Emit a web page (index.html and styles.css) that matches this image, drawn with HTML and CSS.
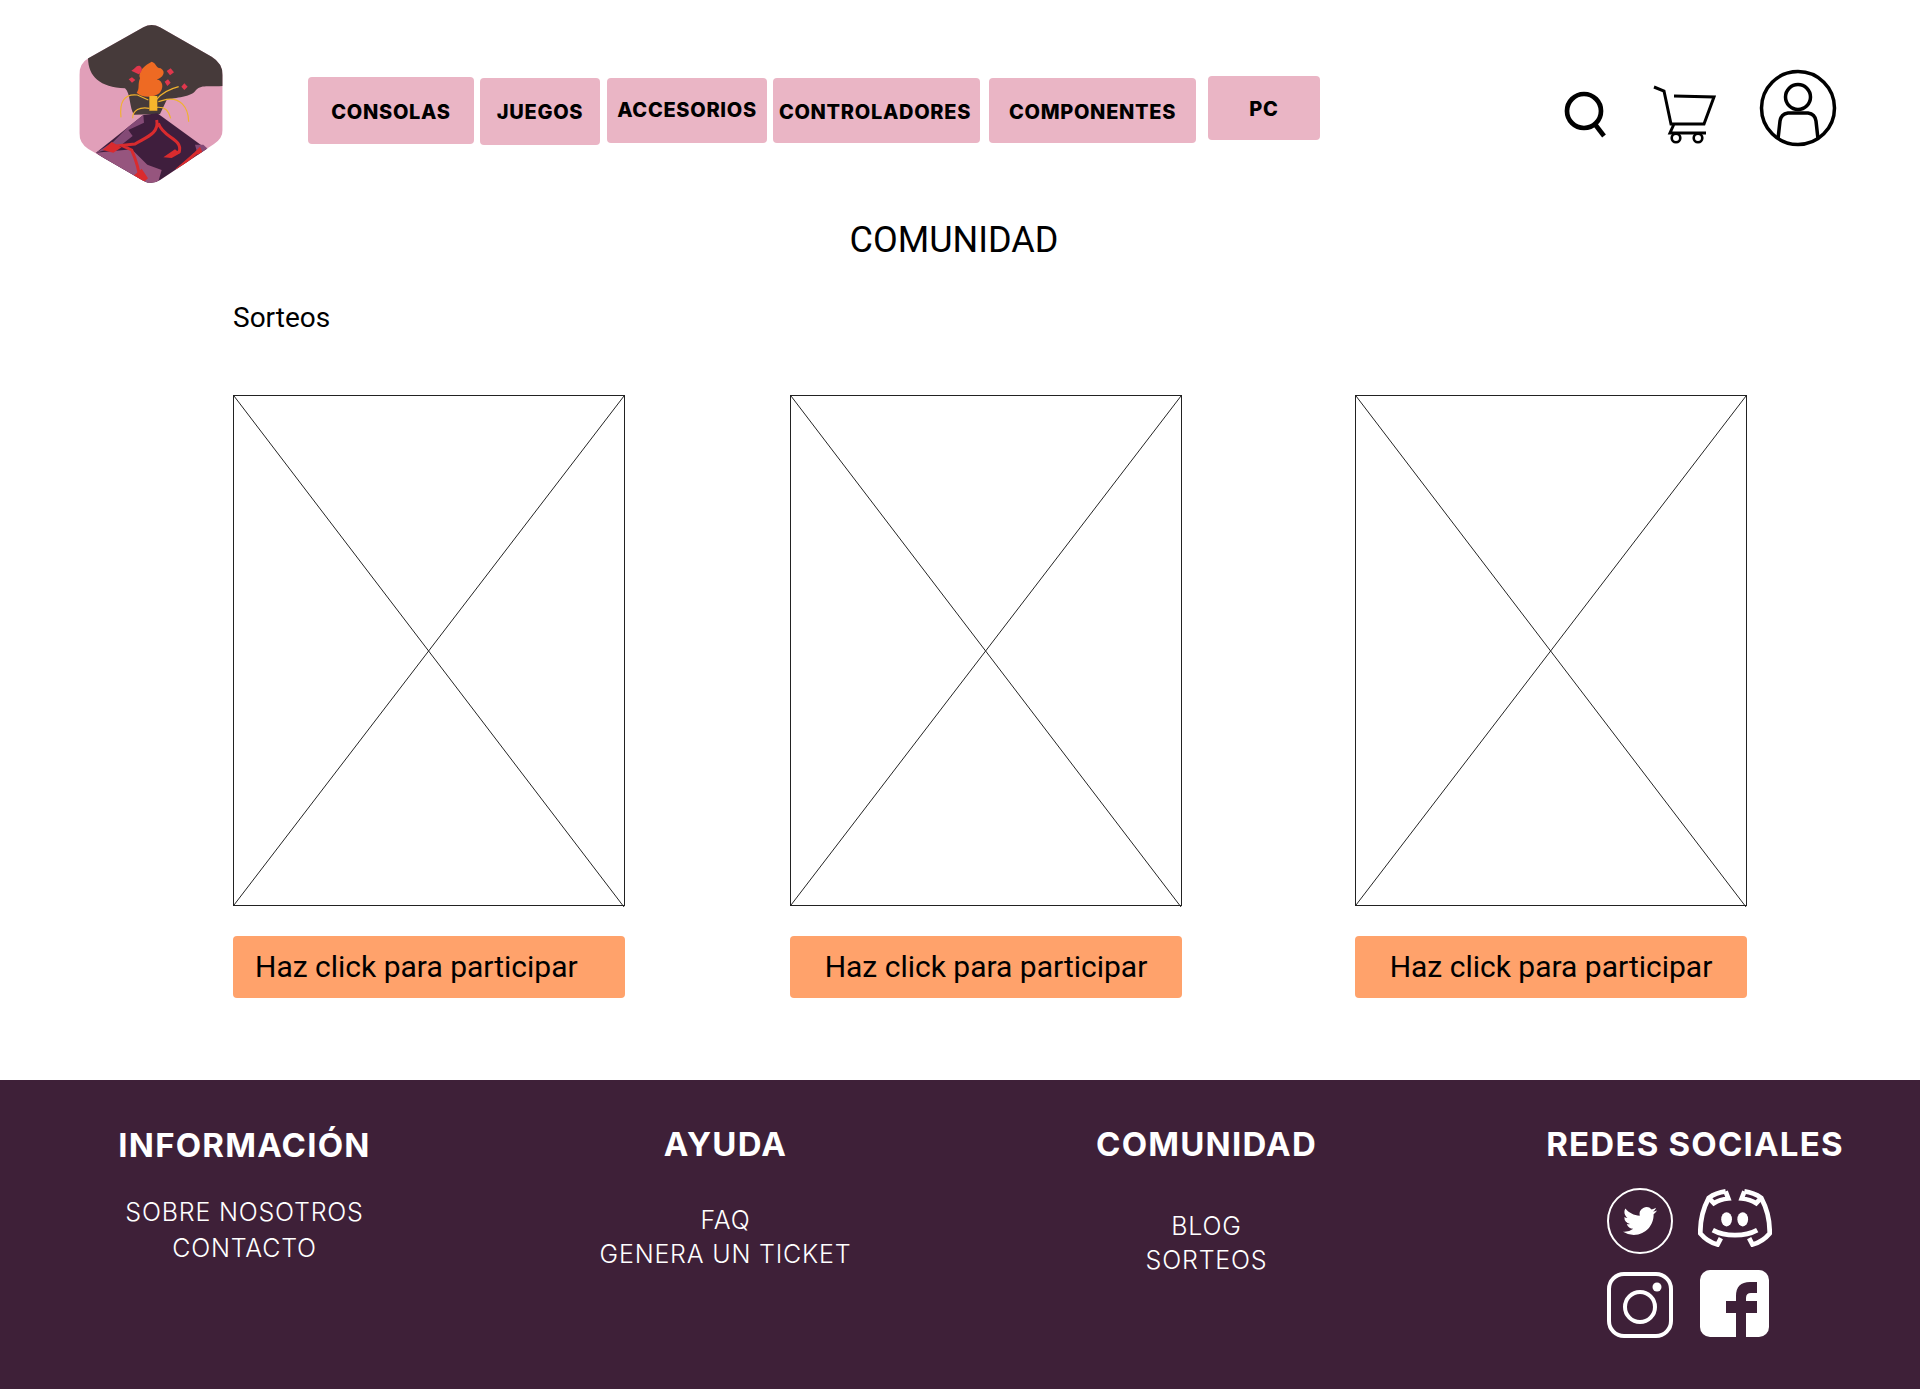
FILE: index.html
```html
<!DOCTYPE html>
<html lang="es">
  <head>
    <meta charset="UTF-8" />
    <title>Comunidad</title>
    <link rel="stylesheet" href="styles.css">
  </head>
  <body>
    <header class="header">
      <svg class="logo" viewBox="0 0 600 570">
        <defs>
          <clipPath id="hex">
            <path d="M250 52 Q275 38 300 52 L455 140 Q488 160 488 195 L488 360 Q488 385 462 402 L300 510 Q275 526 250 512 L85 417 Q58 400 58 370 L58 195 Q58 160 85 145 Z" />
          </clipPath>
        </defs>
        <g clip-path="url(#hex)">
          <rect x="50" y="30" width="445" height="500" fill="#e19fb9" />
          <path d="M84 30 H490 V228 C450 232 425 222 408 240 C395 262 345 262 320 270 L300 312 L222 314 C208 295 212 250 195 235 C120 232 85 200 84 145 Z" fill="#463a3a" />
          <path d="M250 315 L292 310 L455 428 L300 525 L230 525 L108 428 Z" fill="#3f1e3d" />
          <path d="M250 315 L205 350 L160 395 L108 428 L180 408 L218 378 L205 360 L252 338 Z" fill="#844a76" />
          <path d="M108 428 L215 418 L262 464 L305 480 L292 525 L230 525 Z" fill="#96557e" />
          <path d="M405 404 L430 404 L456 428 L418 450 Z" fill="#844a76" />
          <path d="M290 330 C300 372 250 385 225 402 L185 406 L215 420 C230 455 238 485 240 510 M295 340 C310 385 368 385 358 425 L325 438 M405 432 L350 480" fill="none" stroke="#d92b2e" stroke-width="9" />
          <path d="M128 420 L155 396 L185 412 L160 428 Z M310 442 L345 418 L360 430 L335 444 Z M390 440 L420 410 L428 428 Z M345 487 L385 448 L392 465 Z M220 498 L245 476 L264 505 L245 522 Z" fill="#d92b2e" />
          <path d="M275 155 C290 160 285 172 302 175 C320 185 308 205 290 208 C310 212 312 235 298 250 C285 262 245 265 230 248 C240 235 232 225 240 205 C232 185 255 165 275 155 Z" fill="#ee6a23" />
          <path d="M214 182 C225 178 228 165 240 168 C250 175 245 188 236 193 Z M320 183 L332 175 L342 187 L330 196 Z M206 208 L216 202 L226 210 L216 218 Z M314 215 L324 208 L332 218 L322 228 Z M364 230 L373 220 L383 230 L373 240 Z" fill="#e0374c" />
          <path d="M268 258 H292 V302 H268 Z" fill="#f7b52c" />
          <path d="M183 322 C178 280 190 250 232 255 L265 270 M218 325 C218 300 240 290 268 295 M356 230 C325 238 305 250 290 268 M386 335 C385 290 360 262 320 268 L295 275 M332 325 C325 300 315 290 290 292" fill="none" stroke="#f0b22e" stroke-width="3.5" />
        </g>
      </svg>
      <nav class="nav">
        <a class="nav-btn consolas">CONSOLAS</a>
        <a class="nav-btn juegos">JUEGOS</a>
        <a class="nav-btn accesorios">ACCESORIOS</a>
        <a class="nav-btn controladores">CONTROLADORES</a>
        <a class="nav-btn componentes">COMPONENTES</a>
        <a class="nav-btn pc">PC</a>
      </nav>
      <div class="tools">
        <svg class="tool-search" viewBox="0 0 46 50">
          <circle cx="21" cy="21" r="17" fill="none" stroke="#000" stroke-width="4.7" />
          <path d="M31 33 L41 46" stroke="#000" stroke-width="4.7" fill="none" />
        </svg>
        <svg class="tool-cart" viewBox="0 0 66 62">
          <path d="M2 3 L12 7 L19 40 H52 L62 13 L22 12 M22 40 L18 49 H54" fill="none" stroke="#000" stroke-width="3" />
          <circle cx="24" cy="54" r="4.3" fill="#fff" stroke="#000" stroke-width="2.6" />
          <circle cx="46" cy="54" r="4.3" fill="#fff" stroke="#000" stroke-width="2.6" />
        </svg>
        <svg class="tool-user" viewBox="0 0 78 78">
          <circle cx="39" cy="39" r="36.5" fill="none" stroke="#000" stroke-width="3.5" />
          <circle cx="39" cy="28" r="12.5" fill="none" stroke="#000" stroke-width="3.5" />
          <path d="M19 70 L21 52 Q22 45 29 44 H49 Q56 45 57 52 L59 70" fill="none" stroke="#000" stroke-width="3.5" />
        </svg>
      </div>
    </header>

    <main class="main">
      <h1 class="page-title">COMUNIDAD</h1>
      <h2 class="section-title">Sorteos</h2>
      <div class="cards">
        <div class="card">
          <svg class="placeholder" viewBox="0 0 392 512" preserveAspectRatio="none">
            <path d="M0 0 L392 514 M392 0 L0 512" stroke="#222" stroke-width="1" fill="none" />
          </svg>
          <a class="participar first">Haz click para participar</a>
        </div>
        <div class="card">
          <svg class="placeholder" viewBox="0 0 392 512" preserveAspectRatio="none">
            <path d="M0 0 L392 514 M392 0 L0 512" stroke="#222" stroke-width="1" fill="none" />
          </svg>
          <a class="participar">Haz click para participar</a>
        </div>
        <div class="card card-last">
          <svg class="placeholder" viewBox="0 0 392 512" preserveAspectRatio="none">
            <path d="M0 0 L392 514 M392 0 L0 512" stroke="#222" stroke-width="1" fill="none" />
          </svg>
          <a class="participar">Haz click para participar</a>
        </div>
      </div>
    </main>

    <footer class="footer">
      <div class="col col-info">
        <h3>INFORMACIÓN</h3>
        <a>SOBRE NOSOTROS</a>
        <a>CONTACTO</a>
      </div>
      <div class="col col-ayuda">
        <h3>AYUDA</h3>
        <a>FAQ</a>
        <a>GENERA UN TICKET</a>
      </div>
      <div class="col col-comunidad">
        <h3>COMUNIDAD</h3>
        <a>BLOG</a>
        <a>SORTEOS</a>
      </div>
      <div class="col col-redes">
        <h3>REDES SOCIALES</h3>
        <div class="social">
          <svg class="ic-twitter" viewBox="0 0 66 66">
            <circle cx="33" cy="33" r="32" fill="none" stroke="#fff" stroke-width="2" />
            <g transform="translate(16 16) scale(1.42)">
              <path fill="#fff" d="M23.953 4.57a10 10 0 01-2.825.775 4.958 4.958 0 002.163-2.723c-.951.555-2.005.959-3.127 1.184a4.92 4.92 0 00-8.384 4.482C7.69 8.095 4.067 6.13 1.64 3.162a4.822 4.822 0 00-.666 2.475c0 1.71.87 3.213 2.188 4.096a4.904 4.904 0 01-2.228-.616v.06a4.923 4.923 0 003.946 4.827 4.996 4.996 0 01-2.212.085 4.936 4.936 0 004.604 3.417 9.867 9.867 0 01-6.102 2.105c-.39 0-.779-.023-1.17-.067a13.995 13.995 0 007.557 2.209c9.053 0 13.998-7.496 13.998-13.985 0-.21 0-.42-.015-.63A9.935 9.935 0 0024 4.59z" />
            </g>
          </svg>
          <svg class="ic-discord" viewBox="0 0 220 172">
            <path d="M82 7 C60 10 45 17 32 26 C14 60 6 95 7 132 C22 150 40 160 58 165 L68 146 M138 7 C160 10 175 17 188 26 C206 60 214 95 213 132 C198 150 180 160 162 165 L152 146" fill="none" stroke="#fff" stroke-width="14" />
            <path d="M82 7 L90 28 C70 30 58 35 47 42 L32 26 M138 7 L130 28 C150 30 162 35 173 42 L188 26" fill="none" stroke="#fff" stroke-width="14" />
            <path d="M44 122 C80 142 140 142 176 122" fill="none" stroke="#fff" stroke-width="14" />
            <ellipse cx="85" cy="90" rx="16" ry="21" fill="#fff" />
            <ellipse cx="133" cy="90" rx="16" ry="21" fill="#fff" />
          </svg>
          <svg class="ic-instagram" viewBox="0 0 66 66">
            <rect x="2" y="2" width="62" height="62" rx="15" fill="none" stroke="#fff" stroke-width="4" />
            <circle cx="33" cy="35" r="15" fill="none" stroke="#fff" stroke-width="4" />
            <circle cx="50" cy="15" r="4.5" fill="#fff" />
          </svg>
          <svg class="ic-facebook" viewBox="0 0 69 67">
            <rect width="69" height="67" rx="10" fill="#fff" />
            <path d="M36 67 V43 H26 V31 H36 V26 Q36 12 50 12 H57 V23 H51 Q46 23 46 28 V31 H57 V43 H46 V67 Z" fill="#3e2038" />
          </svg>
        </div>
      </div>
    </footer>
  </body>
</html>
```

FILE: styles.css
```css
* {
  box-sizing: border-box;
}

body {
  margin: 0;
  background: #fff;
  color: #000;
  font-family: Roboto, sans-serif;
}

.header {
  display: flex;
  align-items: flex-start;
  height: 205px;
  padding: 10px 0 0 60px;
}

.logo {
  width: 200px;
  height: 190px;
}

.nav {
  display: flex;
  align-items: flex-start;
  margin-left: 48px;
  margin-top: 66px;
}

.nav-btn {
  display: flex;
  justify-content: center;
  align-items: center;
  background: #eab5c5;
  border-radius: 4px;
  font-family: Inter, sans-serif;
  font-weight: 800;
  font-size: 20px;
  letter-spacing: 0.7px;
}

.consolas {
  width: 166px;
  height: 67px;
  margin-top: 1px;
  padding-top: 3px;
}

.juegos {
  width: 120px;
  height: 67px;
  margin-left: 6px;
  margin-top: 2px;
}

.accesorios {
  width: 160px;
  height: 65px;
  margin-left: 7px;
  margin-top: 2px;
  padding-bottom: 1px;
}

.controladores {
  width: 207px;
  height: 65px;
  margin-left: 6px;
  margin-top: 2px;
  padding: 3px 3px 0 0;
}

.componentes {
  width: 207px;
  height: 65px;
  margin-left: 9px;
  margin-top: 2px;
  padding-top: 3px;
}

.pc {
  width: 112px;
  height: 64px;
  margin-left: 12px;
  padding-top: 1px;
}

.tools {
  display: flex;
  align-items: flex-start;
  margin-left: 243px;
}

.tool-search {
  width: 46px;
  height: 50px;
  margin-top: 80px;
}

.tool-cart {
  width: 66px;
  height: 62px;
  margin-top: 74px;
  margin-left: 43px;
}

.tool-user {
  width: 78px;
  height: 78px;
  margin-top: 59px;
  margin-left: 41px;
}

.main {
  height: 875px;
  padding: 13px 0 0 233px;
}

.page-title {
  margin: 0;
  padding-right: 245px;
  text-align: center;
  font-size: 36px;
  font-weight: 400;
  line-height: 44px;
}

.section-title {
  margin: 39px 0 0;
  font-size: 28px;
  font-weight: 400;
  line-height: 34px;
}

.cards {
  display: flex;
  margin-top: 60px;
}

.card {
  width: 392px;
}

.card + .card {
  margin-left: 165px;
}

.card-last.card-last {
  margin-left: 173px;
}

.placeholder {
  display: block;
  width: 392px;
  height: 511px;
  border: 1px solid #222;
  overflow: visible;
}

.participar {
  display: block;
  height: 62px;
  margin-top: 30px;
  background: #ffa26b;
  border-radius: 4px;
  font-size: 30px;
  line-height: 62px;
  text-align: center;
}

.participar.first {
  padding-left: 22px;
  text-align: left;
}

.footer {
  display: flex;
  height: 309px;
  background: #3e2038;
  color: #fff;
  font-family: Inter, sans-serif;
}

.col {
  display: flex;
  flex: none;
  flex-direction: column;
  align-items: center;
  width: 481px;
  font-weight: 300;
  font-size: 25px;
  letter-spacing: 0.8px;
}

.col h3 {
  margin: 0;
  font-size: 33px;
  font-weight: 700;
  line-height: 40px;
  letter-spacing: 1.2px;
}

.col-info {
  margin-left: 4px;
  padding-top: 45px;
  line-height: 36px;
}

.col-info h3 {
  margin-bottom: 29px;
}

.col-ayuda {
  padding-top: 44px;
  line-height: 34px;
}

.col-ayuda h3 {
  margin-bottom: 39px;
}

.col-comunidad {
  padding-top: 44px;
  line-height: 34px;
}

.col-comunidad h3 {
  margin-bottom: 45px;
}

.col-redes {
  width: 450px;
  margin-left: 23px;
  padding-top: 44px;
}

.social {
  display: grid;
  grid-template-columns: 66px 74px;
  grid-template-rows: 68px 67px;
  column-gap: 25px;
  row-gap: 16px;
  align-items: center;
  justify-items: center;
  margin-top: 23px;
  margin-right: 12px;
}

.ic-twitter {
  width: 66px;
  height: 66px;
}

.ic-discord {
  width: 74px;
  height: 58px;
  margin-bottom: 6px;
}

.ic-instagram {
  width: 66px;
  height: 66px;
}

.ic-facebook {
  width: 69px;
  height: 67px;
  margin-bottom: 2px;
}
```
